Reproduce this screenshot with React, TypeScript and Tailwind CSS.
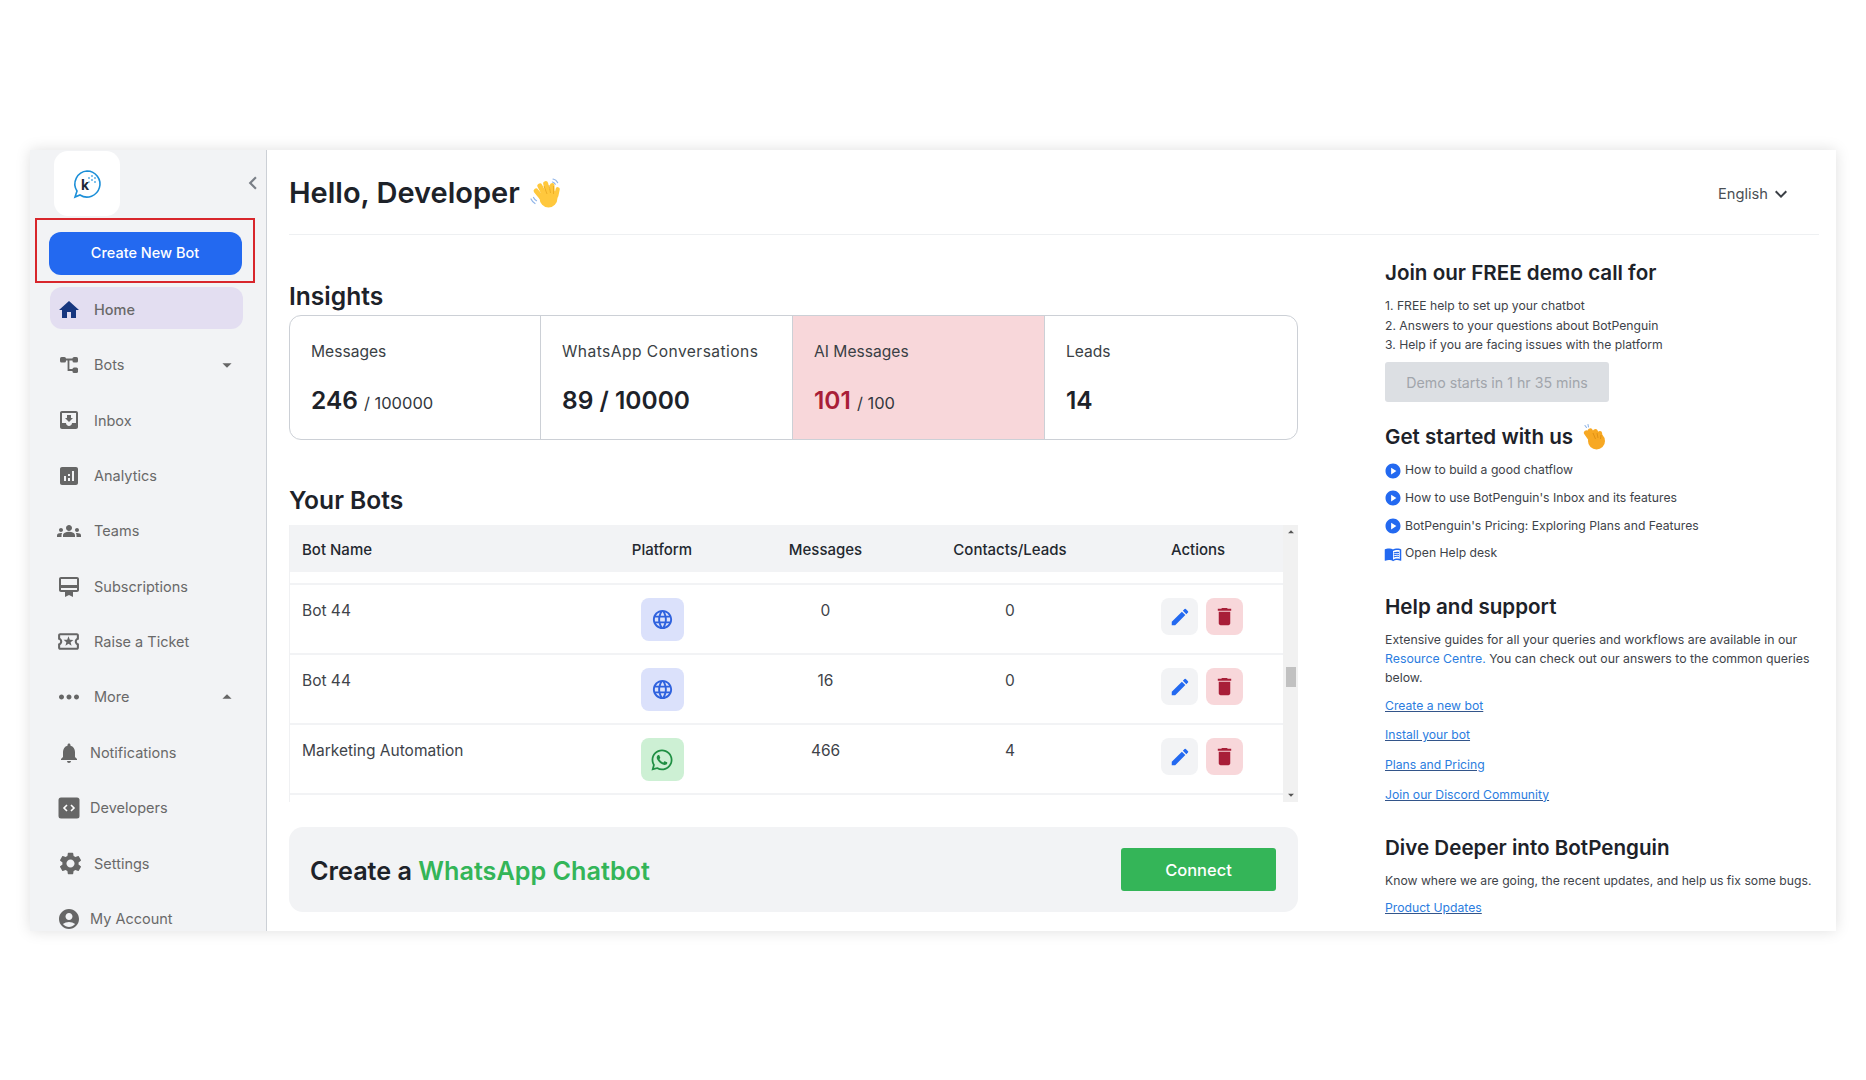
import React from "react";
import {
  MdHome, MdMoveToInbox, MdAnalytics, MdGroups, MdCardMembership, MdOutlineLocalActivity, MdMoreHoriz,
  MdNotifications, MdSettings, MdAccountCircle, MdEdit, MdDelete, MdLanguage, MdPlayCircle, MdMenuBook,
  MdKeyboardArrowDown, MdArrowDropDown, MdArrowDropUp, MdChevronLeft,
} from "react-icons/md";
import { FaWhatsapp } from "react-icons/fa";

const font = "font-['Inter','Liberation_Sans',sans-serif]";

function Logo() {
  return (
    <svg width="32" height="32" viewBox="0 0 32 32">
      <path d="M16 3a13 13 0 1 1-7 24l-5 2 2-6A13 13 0 0 1 16 3z" fill="none" stroke="#1c8fd8" strokeWidth="1.6" />
      <text x="10" y="22" fontSize="14" fontWeight="700" fill="#1d2939" fontFamily="Inter, sans-serif">k</text>
      <g fill="#4aa8e4">
        <circle cx="18" cy="10" r="0.9" /><circle cx="21" cy="8" r="0.9" /><circle cx="21" cy="12" r="0.9" />
        <circle cx="24" cy="10" r="0.9" /><circle cx="24" cy="14" r="0.9" /><circle cx="18" cy="14" r="0.8" />
      </g>
    </svg>
  );
}

function BotsIcon() {
  return (
    <svg width="20" height="20" viewBox="0 0 20 20">
      <path d="M5 4.5h11M9.5 4.5v10.5h6.5" fill="none" stroke="#666" strokeWidth="1.8" />
      <rect x="1" y="2" width="6" height="5.5" rx="1.6" fill="#666" />
      <rect x="13.5" y="2" width="5.5" height="5.5" rx="1.6" fill="#666" />
      <rect x="13.5" y="12.5" width="5.5" height="5.5" rx="1.6" fill="#666" />
    </svg>
  );
}

function DevIcon() {
  return (
    <svg width="22" height="22" viewBox="0 0 22 22">
      <rect x="0.5" y="0.5" width="21" height="21" rx="2.5" fill="#666" />
      <path d="M9 8l-3 3 3 3M13 8l3 3-3 3" fill="none" stroke="#fff" strokeWidth="1.6" />
    </svg>
  );
}

function Wave() {
  return (
    <svg width="32" height="32" viewBox="0 0 32 32">
      <g fill="none" stroke="#8fb4e8" strokeWidth="1.2" strokeLinecap="round">
        <path d="M1 22c1 2 2 3.5 4 4.5M3.5 20.5c.7 1.4 1.6 2.5 3 3.2" />
        <path d="M23 2c2 .4 3.6 1.6 4.6 3.6M22.5 5c1.2.3 2.2 1 2.8 2.2" />
      </g>
      <g fill="#ffc83d">
        <rect x="6" y="11" width="5" height="13" rx="2.5" transform="rotate(-40 8 17)" />
        <rect x="10" y="6" width="5" height="15" rx="2.5" transform="rotate(-28 12 14)" />
        <rect x="14.5" y="4" width="5" height="15" rx="2.5" transform="rotate(-14 17 12)" />
        <rect x="20" y="6" width="4.6" height="13" rx="2.3" transform="rotate(-2 22 12)" />
        <rect x="25" y="10" width="4.2" height="11" rx="2.1" transform="rotate(12 27 15)" />
        <ellipse cx="18.5" cy="21" rx="9" ry="9.5" />
      </g>
      <path d="M14 9l3 8M19 8l1.5 8M23.5 9l0 8" stroke="#e8a721" strokeWidth="0.8" fill="none" />
    </svg>
  );
}

function Clap() {
  return (
    <svg width="24" height="26" viewBox="0 0 24 26">
      <path d="M2 1.5L3.5 3.5M5 0.5L5.5 3" stroke="#8fb4e8" strokeWidth="1.1" strokeLinecap="round" />
      <g fill="#f7a823">
        <rect x="3" y="6" width="5" height="12" rx="2.5" transform="rotate(-35 5 12)" />
        <rect x="7" y="4" width="5" height="14" rx="2.5" transform="rotate(-30 9 11)" />
        <rect x="11" y="5" width="5" height="14" rx="2.5" transform="rotate(-18 13 11)" />
        <rect x="15" y="7" width="4.5" height="12" rx="2.2" transform="rotate(-6 17 13)" />
        <ellipse cx="13.5" cy="17" rx="8.5" ry="8.5" />
      </g>
      <path d="M10 9l2.5 6M14 9l1 5M18 11l-.5 4" stroke="#d98a10" strokeWidth="0.8" fill="none" />
    </svg>
  );
}

const nav = [
  { label: "Home", icon: <MdHome size={24} color="#17377f" />, gap: "gap-[7px]", active: true },
  { label: "Bots", icon: <BotsIcon />, gap: "gap-[7px]", caret: "down" },
  { label: "Inbox", icon: <MdMoveToInbox size={24} color="#666" />, gap: "gap-[7px]" },
  { label: "Analytics", icon: <MdAnalytics size={24} color="#666" />, gap: "gap-[7px]" },
  { label: "Teams", icon: <MdGroups size={24} color="#666" />, gap: "gap-[7px]" },
  { label: "Subscriptions", icon: <MdCardMembership size={24} color="#666" />, gap: "gap-[7px]" },
  { label: "Raise a Ticket", icon: <MdOutlineLocalActivity size={25} color="#666" />, gap: "gap-[7px]" },
  { label: "More", icon: <MdMoreHoriz size={30} color="#666" />, gap: "gap-[7px]", caret: "up" },
  { label: "Notifications", icon: <MdNotifications size={24} color="#666" />, gap: "gap-[3px]" },
  { label: "Developers", icon: <DevIcon />, gap: "gap-[3px]" },
  { label: "Settings", icon: <MdSettings size={27} color="#666" className="ml-[3px]" />, gap: "gap-[7px]" },
  { label: "My Account", icon: <MdAccountCircle size={24} color="#666" />, gap: "gap-[3px]" },
];

function Sidebar() {
  return (
    <aside className="w-[237px] shrink-0 bg-[#f2f3f5] border-r border-[#ccd0d6] overflow-hidden">
      <div className="flex items-center justify-between pl-[24px] pt-px">
        <div className="w-[66px] h-[65px] rounded-[14px] bg-white flex items-center justify-center">
          <Logo />
        </div>
        <MdChevronLeft size={26} color="#7a7f87" className="-mt-[2px]" />
      </div>
      <div className="ml-[5px] mt-[2px] w-[220px] h-[65px] border-2 border-[#d8262c] flex items-center justify-center pt-[5px]">
        <button className="w-[193px] h-[43px] rounded-[12px] bg-[#2369f0] text-white text-[14.5px] font-medium">Create New Bot</button>
      </div>
      <div className="mt-[4px] ml-[20px] w-[193px]">
        {nav.map((n) => (
          <div key={n.label} className={n.active ? "h-[57px]" : "h-[55.4px]"}>
            <div className={`h-[42px] flex items-center rounded-[12px] ${n.gap} ${n.active ? "bg-[#e3def1] pt-[3px]" : ""}`}>
              <span className="w-[37px] flex justify-center shrink-0">{n.icon}</span>
              <span className={`flex-1 text-[14.5px] text-[#696969] ${n.active ? "font-medium" : ""}`}>{n.label}</span>
              {n.caret === "down" && <MdArrowDropDown size={22} color="#666" className="mr-[5px]" />}
              {n.caret === "up" && <MdArrowDropUp size={22} color="#666" className="mr-[5px]" />}
            </div>
          </div>
        ))}
      </div>
    </aside>
  );
}

function Stat({ label, value, suffix, pink, width, wide }: { label: string; value: string; suffix?: string; pink?: boolean; width: string; wide?: boolean }) {
  return (
    <div className={`pl-[21px] pt-[24px] ${width} ${pink ? "bg-[#f8d7da]" : ""}`}>
      <div className={`text-[15.6px] leading-[24px] text-[#3a3f45] ${wide ? "tracking-[0.45px]" : ""}`}>{label}</div>
      <div className="mt-[18px] leading-[36px]">
        <span className={`text-[24.5px] font-semibold ${pink ? "text-[#a81e38]" : "text-[#1d2229]"}`}>{value}</span>
        {suffix && <span className="text-[16.5px] text-[#33383e] ml-[6px]">{suffix}</span>}
      </div>
    </div>
  );
}

const rows = [
  { name: "Bot 44", kind: "web", messages: "0", leads: "0" },
  { name: "Bot 44", kind: "web", messages: "16", leads: "0" },
  { name: "Marketing Automation", kind: "wa", messages: "466", leads: "4" },
];

function BotsTable() {
  return (
    <div className="mt-[7px] h-[277px] flex overflow-hidden">
      <div className="w-[994px] border-l border-[#f0f1f3]">
        <div className="h-[47px] pt-[3px] bg-[#f2f3f5] grid grid-cols-[290px_164px_163px_206px_170px] items-center text-[15px] font-medium text-[#23282f] text-center">
          <div className="pl-[12px] text-left">Bot Name</div>
          <div>Platform</div>
          <div>Messages</div>
          <div>Contacts/Leads</div>
          <div>Actions</div>
        </div>
        <div className="h-[13px] border-b-2 border-[#f2f3f5]" />
        {rows.map((r, i) => (
          <div key={i} className="h-[70px] pt-[13px] border-b-2 border-[#f2f3f5] grid grid-cols-[290px_164px_163px_206px_170px] items-start text-[15.5px] leading-[24px] text-[#3e4349] text-center">
            <div className="pl-[12px] pt-px text-left">{r.name}</div>
            <div className="flex justify-center">
              {r.kind === "web" ? (
                <div className="w-[43px] h-[43px] rounded-[8px] bg-[#dbe1fb] flex items-center justify-center"><MdLanguage size={23} color="#2f62de" /></div>
              ) : (
                <div className="w-[43px] h-[43px] rounded-[8px] bg-[#cdf0d4] flex items-center justify-center"><FaWhatsapp size={24} color="#1f8f43" /></div>
              )}
            </div>
            <div className="pt-px">{r.messages}</div>
            <div className="pt-px">{r.leads}</div>
            <div className="flex justify-center gap-[8px] pl-[8px]">
              <div className="w-[37px] h-[37px] rounded-[8px] bg-[#f2f3f5] flex items-center justify-center"><MdEdit size={22} color="#2369f0" /></div>
              <div className="w-[37px] h-[37px] rounded-[8px] bg-[#f8d7da] flex items-center justify-center"><MdDelete size={23} color="#a81e38" /></div>
            </div>
          </div>
        ))}
      </div>
      <div className="w-[15px] bg-[#f1f1f1] flex flex-col items-center justify-between relative">
        <MdArrowDropUp size={14} color="#555" />
        <div className="absolute top-[142px] left-[3px] w-[10px] h-[20px] bg-[#c1c1c1]" />
        <MdArrowDropDown size={14} color="#555" />
      </div>
    </div>
  );
}

function Heading({ children, className = "" }: { children: React.ReactNode; className?: string }) {
  return <h3 className={`text-[20.6px] leading-[28px] font-semibold text-[#1d2229] ${className}`}>{children}</h3>;
}

function RightPanel() {
  const items = ["How to build a good chatflow", "How to use BotPenguin's Inbox and its features", "BotPenguin's Pricing: Exploring Plans and Features"];
  const links = ["Create a new bot", "Install your bot", "Plans and Pricing", "Join our Discord Community"];
  return (
    <div className="ml-[87px] w-[434px] text-[12.2px] text-[#3e4349]">
      <Heading className="mt-[24px]">Join our FREE demo call for</Heading>
      <div className="mt-[9px] leading-[19.5px]">
        <div>1. FREE help to set up your chatbot</div>
        <div>2. Answers to your questions about BotPenguin</div>
        <div>3. Help if you are facing issues with the platform</div>
      </div>
      <button className="block mt-[7px] w-[224px] h-[40px] pt-[2px] rounded-[3px] bg-[#dcdfe3] text-[14.2px] text-[#a1a5ab]">Demo starts in 1 hr 35 mins</button>
      <Heading className="mt-[21px] flex items-center gap-[10px]">Get started with us <Clap /></Heading>
      <div className="mt-[10px] flex flex-col gap-[7.7px]">
        {items.map((t) => (
          <div key={t} className="h-[20px] flex items-center gap-[3px]"><MdPlayCircle size={18} color="#2369f0" className="-ml-px" />{t}</div>
        ))}
        <div className="h-[20px] flex items-center gap-[3px]"><MdMenuBook size={18} color="#2369f0" className="-ml-px" />Open Help desk</div>
      </div>
      <Heading className="mt-[29px]">Help and support</Heading>
      <p className="mt-[9px] leading-[19px] text-[12.3px]">
        Extensive guides for all your queries and workflows are available in our <span className="text-[#2b7de0]">Resource Centre.</span> You can check out our answers to the common queries below.
      </p>
      <div className="mt-[9px] flex flex-col gap-[9.7px]">
        {links.map((l) => (
          <a key={l} className="h-[20px] leading-[20px] text-[#2b7de0] underline decoration-[#33558a]">{l}</a>
        ))}
      </div>
      <Heading className="mt-[29px]">Dive Deeper into BotPenguin</Heading>
      <p className="mt-[9px] leading-[20px] text-[12.2px]">Know where we are going, the recent updates, and help us fix some bugs.</p>
      <a className="block mt-[7px] leading-[20px] text-[#2b7de0] underline decoration-[#33558a]">Product Updates</a>
    </div>
  );
}

export default function App() {
  return (
    <div className={`min-h-[1080px] bg-white pt-[150px] pl-[30px] ${font}`}>
      <div className="w-[1806px] h-[781px] flex bg-white shadow-[0_0_14px_rgba(0,0,0,0.13)] overflow-hidden">
        <Sidebar />
        <main className="flex-1 pl-[22px] pr-[17px] min-w-0">
          <header className="h-[85px] pt-[2px] border-b border-[#eef0f2] flex items-center justify-between pr-[26px]">
            <div className="flex items-center gap-[10px]">
              <h1 className="text-[29px] font-semibold text-[#1d2229]">Hello, Developer</h1>
              <Wave />
            </div>
            <div className="mt-[2px] flex items-center text-[14.7px] text-[#4a4f55]">English <MdKeyboardArrowDown size={24} color="#3a3f45" className="ml-px" /></div>
          </header>
          <div className="flex">
            <div className="w-[1009px] shrink-0">
              <h2 className="mt-[44px] mb-px text-[24.6px] leading-[35px] font-semibold text-[#1d2229]">Insights</h2>
              <div className="h-[125px] flex rounded-[12px] border border-[#ccd0d6] overflow-hidden divide-x divide-[#ccd0d6]">
                <Stat label="Messages" value="246" suffix="/ 100000" width="w-[251px]" />
                <Stat label="WhatsApp Conversations" value="89 / 10000" wide width="w-[252px]" />
                <Stat label="AI Messages" value="101" suffix="/ 100" pink width="w-[252px]" />
                <Stat label="Leads" value="14" width="flex-1" />
              </div>
              <h2 className="mt-[43px] text-[24.6px] leading-[35px] font-semibold text-[#1d2229]">Your Bots</h2>
              <BotsTable />
              <div className="mt-[25px] h-[85px] rounded-[14px] bg-[#f2f3f5] flex items-center justify-between pl-[21px] pr-[22px]">
                <div className="text-[25.2px] pt-[5px] font-semibold text-[#1d2229]">Create a <span className="text-[#34b558]">WhatsApp Chatbot</span></div>
                <button className="w-[155px] h-[43px] pt-px rounded-[3px] bg-[#34b558] text-white text-[16.5px] font-medium">Connect</button>
              </div>
            </div>
            <RightPanel />
          </div>
        </main>
      </div>
    </div>
  );
}
